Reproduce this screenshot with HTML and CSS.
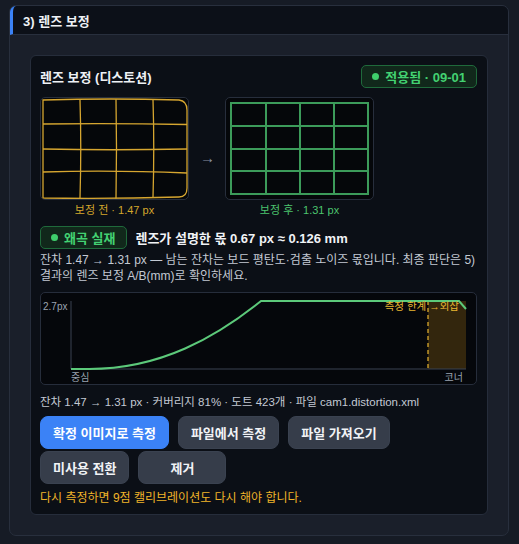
FILE: index.html
```html
<!DOCTYPE html>
<html lang="ko">
<head>
<meta charset="utf-8">
<link rel="stylesheet" href="styles.css">
</head>
<body>
<section class="panel">
  <header class="panel-head">3) 렌즈 보정</header>
  <div class="panel-body">
    <div class="card">
      <div class="card-top">
        <h2 class="card-title">렌즈 보정 (디스토션)</h2>
        <span class="pill"><span class="dot"></span>적용됨 · 09-01</span>
      </div>

      <div class="compare">
        <figure class="fig">
          <div class="shot">
            <svg width="147" height="101" viewBox="0 0 147 101" class="grid-before">
              <path d="M2 2 Q70 0 138 2 Q146 3 146 12 L146 90 Q146 99 138 99 Q70 101 2 100 Z"/>
              <path d="M39 2 Q40.5 50 39 100"/>
              <path d="M75 1.2 Q76 50 75 100.5"/>
              <path d="M112 1.5 Q113.5 50 112 100"/>
              <path d="M2 26 Q70 25 146 26.5"/>
              <path d="M2 51 Q70 52.5 146 51"/>
              <path d="M2 74 Q70 72 146 75"/>
            </svg>
          </div>
          <figcaption class="cap cap-before">보정 전 · 1.47 px</figcaption>
        </figure>
        <span class="arrow">→</span>
        <figure class="fig">
          <div class="shot">
            <svg width="147" height="101" viewBox="0 0 147 101" class="grid-after">
              <rect x="5" y="5" width="137" height="91"/>
              <path d="M40 5 V96 M74 5 V96 M108 5 V96 M5 28 H142 M5 51 H142 M5 73 H142"/>
            </svg>
          </div>
          <figcaption class="cap cap-after">보정 후 · 1.31 px</figcaption>
        </figure>
      </div>

      <div class="status">
        <span class="pill pill-sm"><span class="dot"></span>왜곡 실재</span>
        <strong class="status-text">렌즈가 설명한 몫 0.67 px ≈ 0.126 mm</strong>
      </div>
      <p class="desc">잔차 1.47 → 1.31 px — 남는 잔차는 보드 평탄도·검출 노이즈 몫입니다. 최종 판단은 5) 결과의 렌즈 보정 A/B(mm)로 확인하세요.</p>

      <div class="chart">
        <svg width="433" height="91" viewBox="0 0 433 91">
          <rect x="387" y="8" width="38" height="68" class="shade"/>
          <line x1="30" y1="8" x2="30" y2="76" class="axis"/>
          <line x1="30" y1="76" x2="425" y2="76" class="axis"/>
          <line x1="387" y1="8" x2="387" y2="76" class="limit"/>
          <path d="M30 76 L48 76 C120 76 175 44 220 8 L418 8 L425 16" class="curve"/>
          <text x="2" y="17" class="lbl">2.7px</text>
          <text x="30" y="88" class="lbl">중심</text>
          <text x="422" y="88" class="lbl" text-anchor="end">코너</text>
          <text x="418" y="17" class="lbl-warn" text-anchor="end">측정 한계 →외삽</text>
        </svg>
      </div>

      <p class="meta">잔차 1.47 → 1.31 px · 커버리지 81% · 도트 423개 · 파일 cam1.distortion.xml</p>

      <div class="actions">
        <button class="btn btn-primary">확정 이미지로 측정</button>
        <button class="btn">파일에서 측정</button>
        <button class="btn">파일 가져오기</button>
        <button class="btn">미사용 전환</button>
        <button class="btn">제거</button>
      </div>

      <p class="warn">다시 측정하면 9점 캘리브레이션도 다시 해야 합니다.</p>
    </div>
  </div>
</section>
</body>
</html>
```

FILE: styles.css
```css
* { box-sizing: border-box; }
html, body { margin: 0; }
body {
  background: #161b25;
  padding: 5px 10px 0 9px;
  font-family: "Liberation Sans", "Noto Sans CJK KR", sans-serif;
  color: #e6e9ef;
}
.panel {
  width: 500px;
  background: #1a1f2a;
  border: 1px solid #282f3d;
  border-radius: 7px;
}
.panel-head {
  height: 29px;
  background: #0c1018;
  border-left: 3px solid #3b82f6;
  border-bottom: 1px solid #282f3d;
  border-top-left-radius: 6px;
  border-top-right-radius: 6px;
  padding-left: 10px;
  display: flex;
  align-items: center;
  font-size: 13px;
  font-weight: bold;
  color: #eef1f5;
}
.panel-body { padding: 20px; }
.card {
  background: #0b0f16;
  border: 1px solid #262d3b;
  border-radius: 6px;
  padding: 9px 10px 9px 9px;
}
.card-top {
  display: flex;
  justify-content: space-between;
  align-items: center;
}
.card-title {
  margin: 0;
  font-size: 13px;
  font-weight: bold;
  color: #eef1f5;
}
.pill {
  display: inline-flex;
  align-items: center;
  gap: 6px;
  height: 23px;
  padding: 0 10px 0 10px;
  background: #11281b;
  border: 1px solid #1f6a3b;
  border-radius: 5px;
  color: #43d272;
  font-size: 13px;
  font-weight: bold;
}
.dot {
  width: 7px;
  height: 7px;
  border-radius: 50%;
  background: #3fcf6c;
}
.compare {
  display: flex;
  align-items: center;
  gap: 11px;
  margin-top: 9px;
}
.fig {
  margin: 0;
  display: flex;
  flex-direction: column;
  align-items: center;
}
.shot {
  width: 149px;
  height: 103px;
  border: 1px solid #272e3c;
  border-radius: 5px;
  background: #05070a;
  overflow: hidden;
}
.shot svg { display: block; fill: none; }
.grid-before path { stroke: #d6a630; stroke-width: 1.3; }
.grid-after rect, .grid-after path { stroke: #3c9b5a; stroke-width: 2; }
.cap {
  margin-top: 3px;
  font-size: 11px;
  line-height: 14px;
}
.cap-before { color: #d4a72c; }
.cap-after { color: #4cc46e; }
.arrow {
  color: #8b93a1;
  font-size: 15px;
  width: 14px;
  text-align: center;
}
.status {
  display: flex;
  align-items: center;
  gap: 8px;
  margin-top: 9px;
}
.pill-sm { padding: 0 11px 0 10px; }
.status-text {
  font-size: 13px;
  color: #f1f3f6;
}
.desc {
  margin: 3px 0 0;
  font-size: 12px;
  line-height: 16px;
  color: #c3c9d3;
}
.chart {
  margin-top: 8px;
  height: 93px;
  border: 1px solid #262d3b;
  border-radius: 5px;
  background: #05070b;
}
.chart svg { display: block; }
.shade { fill: #33260d; }
.axis { stroke: #3a4252; stroke-width: 1; }
.limit { stroke: #e8b530; stroke-width: 1.2; stroke-dasharray: 4 3; }
.curve { fill: none; stroke: #5cc97a; stroke-width: 2; }
.lbl { fill: #9aa3b0; font-size: 10px; font-family: "Liberation Sans", "Noto Sans CJK KR", sans-serif; }
.lbl-warn { fill: #e8b530; font-size: 10.5px; font-family: "Liberation Sans", "Noto Sans CJK KR", sans-serif; }
.meta {
  margin: 9px 0 0;
  font-size: 11.5px;
  line-height: 16px;
  color: #c3c9d3;
}
.actions {
  display: flex;
  flex-wrap: wrap;
  gap: 2px 9px;
  margin-top: 6px;
  width: 360px;
}
.btn {
  height: 33px;
  min-width: 88px;
  padding: 0 12px;
  border: 1px solid #3a4250;
  border-radius: 8px;
  background: #363d4a;
  color: #f1f3f6;
  font-family: "Liberation Sans", "Noto Sans CJK KR", sans-serif;
  font-size: 13px;
  font-weight: bold;
}
.btn-primary {
  background: #3b82f6;
  border-color: #3b82f6;
  color: #fff;
}
.warn {
  margin: 7px 0 0;
  font-size: 12px;
  line-height: 14px;
  color: #f0b429;
}
```
